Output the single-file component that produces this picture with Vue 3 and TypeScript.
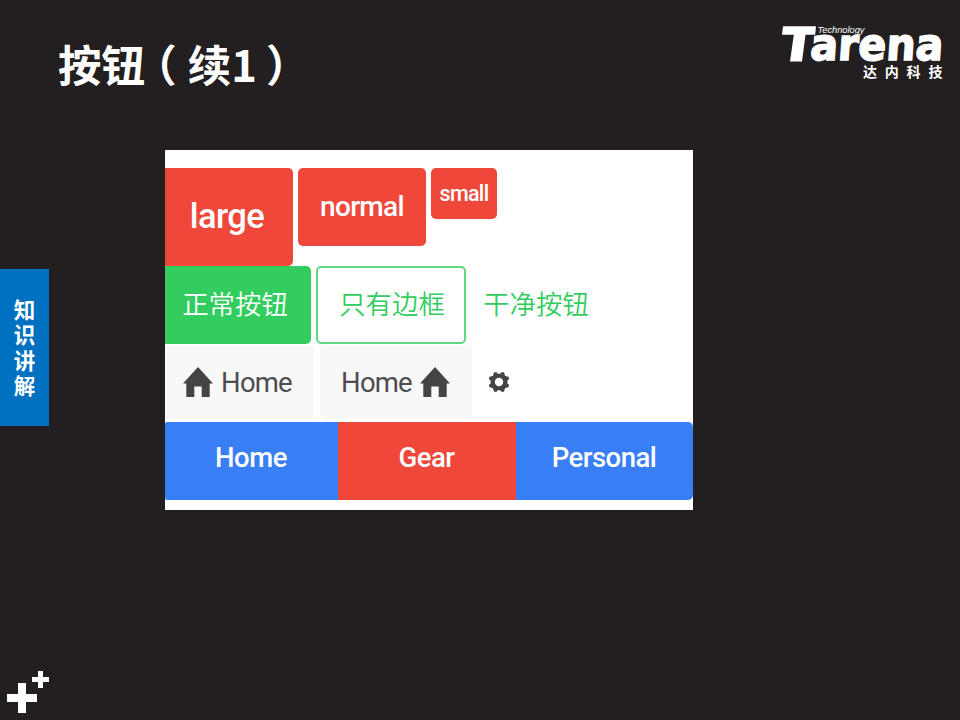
<script setup lang="ts">
interface Segment {
  label: string
  tone: string
}

const sizes: string[] = ['large', 'normal', 'small']
const segments: Segment[] = [
  { label: 'Home', tone: 'blue' },
  { label: 'Gear', tone: 'red' },
  { label: 'Personal', tone: 'blue' },
]
</script>

<template>
  <main class="slide">
    <header class="head">
      <h1 class="title">按钮<span class="paren open">（</span>续1<span class="paren close">）</span></h1>
      <svg class="logo" viewBox="0 0 170 60" aria-label="Tarena">
        <path class="logo-fill" d="M3 1.2H36L35.2 9.8H25.5L22 36.5H10L13.8 9.8H2Z" />
        <text class="brand" x="30" y="35.3" transform="translate(2 0) skewX(-4)" textLength="133" lengthAdjust="spacingAndGlyphs">arena</text>
        <text class="tech" x="37.5" y="7.5" textLength="47" lengthAdjust="spacingAndGlyphs">Technology</text>
        <text class="company" x="83" y="52">达内科技</text>
      </svg>
    </header>

    <div class="body">
      <aside class="rail">
        <div class="tab">知识讲解</div>
      </aside>

      <section class="panel">
        <div class="row sizes">
          <button v-for="size in sizes" :key="size" class="btn red" :class="size">
            <span>{{ size }}</span>
          </button>
        </div>
        <div class="row styles">
          <button class="btn solid">正常按钮</button>
          <button class="btn outline">只有边框</button>
          <button class="btn clear">干净按钮</button>
        </div>
        <div class="row icons">
          <button class="btn stable first">
            <svg class="home" viewBox="0 0 30 30"><path d="M15 0 30 16.5H26.7V30H18.7V19.5H11.3V30H3.3V16.5H0Z" /></svg>
            <span>Home</span>
          </button>
          <button class="btn stable second">
            <span>Home</span>
            <svg class="home" viewBox="0 0 30 30"><path d="M15 0 30 16.5H26.7V30H18.7V19.5H11.3V30H3.3V16.5H0Z" /></svg>
          </button>
          <button class="btn gear" aria-label="Settings">
            <svg viewBox="0 0 20 20">
              <path fill-rule="evenodd" d="M5 .2H7.6L8.6 1.8H11.4L12.4.2H15L16 3.8 19.8 5V7.6L18.4 8.6V11.4L19.8 12.4V15L16 16.2 15 19.8H12.4L11.4 18.2H8.6L7.6 19.8H5L4 16.2.2 15V12.4L1.6 11.4V8.6L.2 7.6V5L4 3.8ZM10 5.8A4.2 4.2 0 1 0 10 14.2 4.2 4.2 0 1 0 10 5.8Z" />
            </svg>
          </button>
        </div>
        <div class="bar">
          <button v-for="segment in segments" :key="segment.label" class="segment" :class="segment.tone">
            {{ segment.label }}
          </button>
        </div>
      </section>
    </div>

    <footer class="foot">
      <svg viewBox="0 0 60 60" aria-hidden="true">
        <path d="M18 23h8v11h11v8H26v11h-8V42H7v-8h11Z" />
        <path d="M38 11h5v6h6v5h-6v6h-5v-6h-6v-5h6Z" />
      </svg>
    </footer>
  </main>
</template>

<style>
body {
  margin: 0;
  background: #231f20;
}
</style>

<style scoped>
.slide {
  width: 960px;
  height: 720px;
  overflow: hidden;
  display: flex;
  flex-direction: column;
  background: #231f20;
  color: #fff;
  font-family: "Noto Sans CJK SC", sans-serif;
}
.head {
  height: 150px;
  display: flex;
  justify-content: space-between;
  align-items: flex-start;
  padding: 0 10px 0 58px;
  box-sizing: border-box;
}
.title {
  margin: 33px 0 0;
  font-size: 43.5px;
  line-height: 62px;
  font-weight: 700;
  white-space: nowrap;
}
.paren {
  font-feature-settings: "halt";
}
.open {
  margin: 0 11px 0 10px;
}
.close {
  margin-left: 9px;
}
.logo {
  width: 170px;
  height: 60px;
  margin-top: 25px;
  fill: #fff;
  overflow: visible;
}
.brand {
  font: 700 44px "DejaVu Sans", sans-serif;
  stroke: #fff;
  stroke-width: 1.6;
}
.tech {
  font: italic 400 9px "Liberation Sans", sans-serif;
}
.company {
  font: 700 14px "Noto Sans CJK SC", sans-serif;
  letter-spacing: 7.8px;
}
.body {
  height: 510px;
  display: flex;
}
.rail {
  width: 165px;
}
.tab {
  width: 49px;
  height: 157px;
  margin-top: 119px;
  padding-top: 30px;
  box-sizing: border-box;
  background: #0070c0;
  writing-mode: vertical-rl;
  font-size: 21.5px;
  letter-spacing: 4px;
  line-height: 49px;
  font-weight: 700;
}
.panel {
  width: 528px;
  height: 360px;
  padding-top: 18px;
  box-sizing: border-box;
  overflow: hidden;
  background: #fff;
}
.row {
  display: flex;
  align-items: flex-start;
}
.btn,
.segment {
  border: 0;
  padding: 0;
  margin: 0;
  box-sizing: border-box;
  display: flex;
  align-items: center;
  justify-content: center;
  color: #fff;
  font-family: Roboto, "Noto Sans CJK SC", sans-serif;
  white-space: nowrap;
}
.btn {
  border-radius: 5px;
  background: transparent;
}
.btn.red,
.segment.red {
  background: #ef473a;
}
.blue {
  background: #387ef5;
}
.sizes {
  height: 98px;
  gap: 5px;
}
.sizes .btn {
  font-weight: 500;
}
.large {
  width: 128px;
  height: 98px;
  border-radius: 0 5px 5px 0;
  font-size: 34.5px;
  letter-spacing: -0.6px;
  padding: 0 4px 2px 0;
}
.normal {
  width: 128px;
  height: 78px;
  font-size: 28px;
  letter-spacing: -0.7px;
  padding-bottom: 1px;
}
.small {
  width: 66px;
  height: 51px;
  font-size: 21.5px;
  letter-spacing: -0.7px;
}
.styles {
  height: 80px;
  gap: 5px;
}
.styles .btn {
  height: 78px;
  font-size: 26.4px;
  font-weight: 350;
  padding-bottom: 5px;
}
.styles .solid {
  width: 146px;
  padding-right: 6px;
  border-radius: 0 5px 5px 0;
  background: #33cd5f;
}
.styles .outline {
  width: 150px;
  padding-left: 2px;
  border: 2px solid #5fd882;
  color: #33cd5f;
}
.styles .clear {
  width: 130px;
  color: #33cd5f;
}
.icons {
  height: 76px;
}
.stable {
  height: 72px;
  background: #f8f8f8;
  color: #4d4d4d;
  font-size: 27.5px;
  letter-spacing: -0.8px;
}
.stable.first {
  width: 149px;
  gap: 8px;
  padding-right: 4px;
  border-radius: 0 4px 4px 0;
}
.stable.second {
  width: 152px;
  gap: 8px;
  margin-left: 6px;
  padding-right: 1px;
}
.home {
  width: 30px;
  height: 30px;
  fill: #444;
}
.gear {
  width: 53px;
  height: 72px;
}
.gear svg {
  width: 20px;
  height: 20px;
  fill: #444;
}
.bar {
  height: 78px;
  display: grid;
  grid-template-columns: 173px 178px 177px;
  border-radius: 2px 5px 5px 2px;
  overflow: hidden;
}
.segment {
  height: 78px;
  font-size: 27.5px;
  font-weight: 500;
  letter-spacing: -0.5px;
  padding: 0 1px 8px 0;
}
.foot {
  height: 60px;
}
.foot svg {
  display: block;
  width: 60px;
  height: 60px;
  fill: #fff;
}
</style>
